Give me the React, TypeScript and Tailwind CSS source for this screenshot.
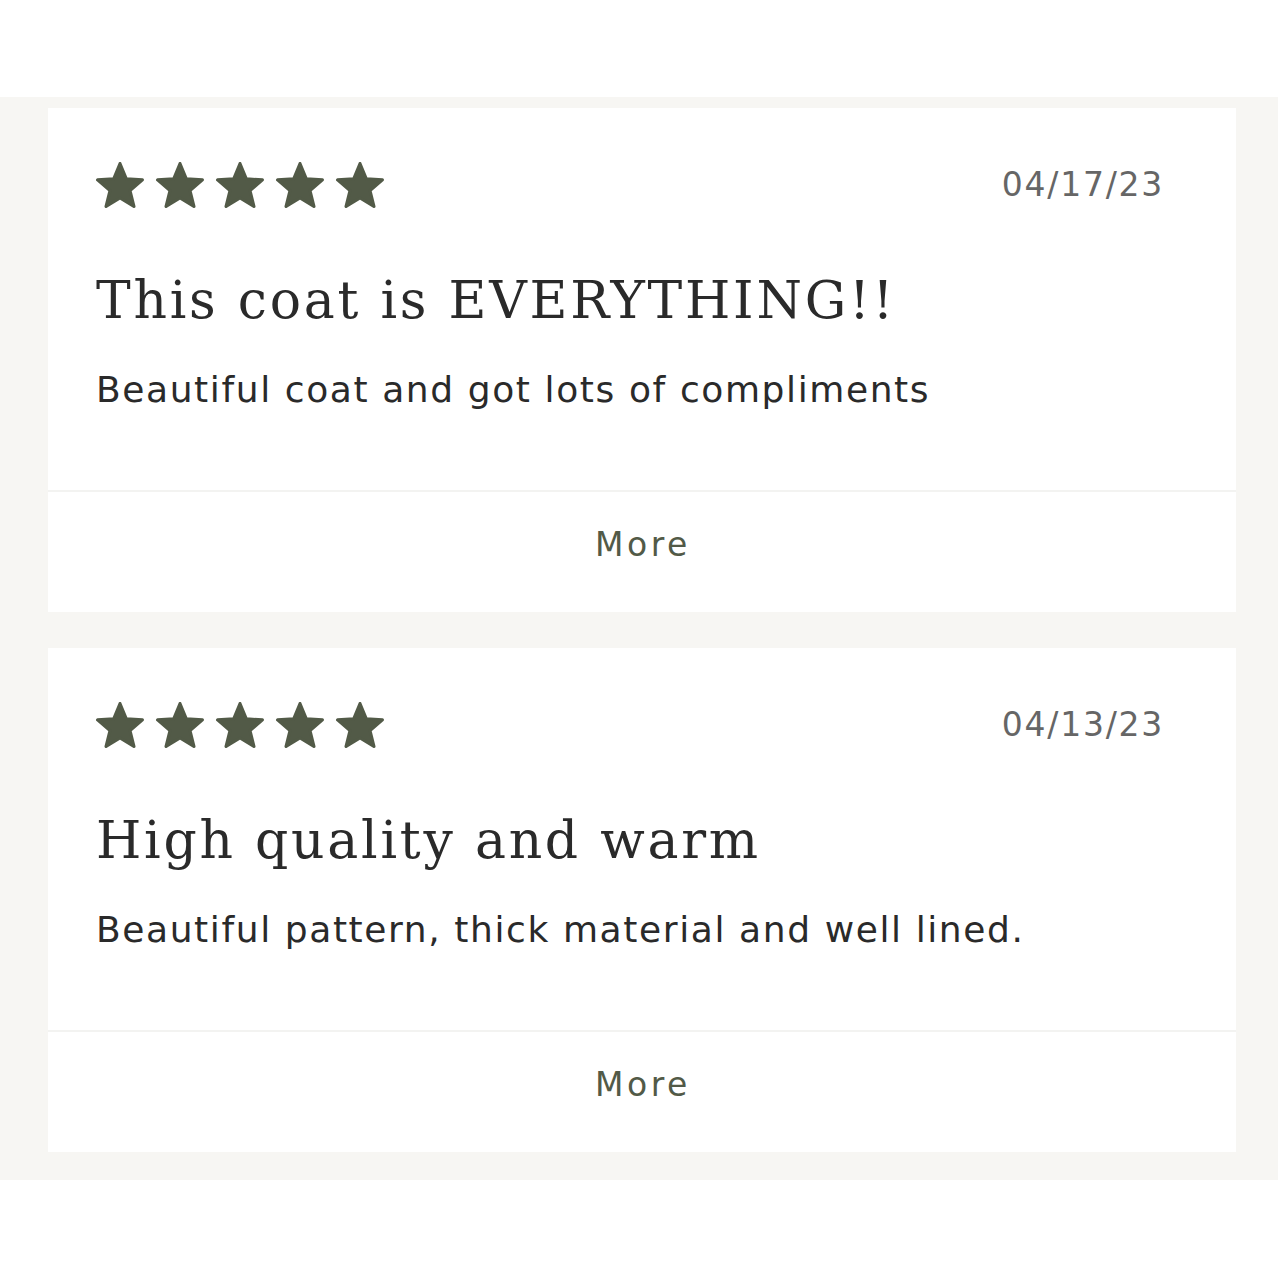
import React from "react";

function Star() {
  return (
    <svg width="48" height="46" viewBox="1 0.5 22 20.8" preserveAspectRatio="none" className="block">
      <path
        d="M12 1.2 L14.9 8.1 L22.3 8.6 L16.6 13.4 L18.4 20.6 L12 16.7 L5.6 20.6 L7.4 13.4 L1.7 8.6 L9.1 8.1 Z"
        fill="#525a47"
        stroke="#525a47"
        strokeWidth="1.4"
        strokeLinejoin="round"
      />
    </svg>
  );
}

const sans = '"DejaVu Sans", Verdana, sans-serif';
const serif = '"DejaVu Serif", Georgia, serif';

function Review({ date, title, body }: { date: string; title: string; body: string }) {
  return (
    <div className="bg-white">
      <div className="pl-[48px] pr-[72px] pt-[54px] h-[382px]">
        <div className="flex items-center justify-between h-[46px]">
          <div className="flex gap-[12px]">
            <Star />
            <Star />
            <Star />
            <Star />
            <Star />
          </div>
          <div className="text-[33px] text-[#666666] tracking-[1.75px]" style={{ fontFamily: sans }}>
            {date}
          </div>
        </div>
        <div
          className="mt-[60px] text-[52px] leading-[64px] text-[#2a2a2a] tracking-[2.75px]"
          style={{ fontFamily: serif }}
        >
          {title}
        </div>
        <div
          className="mt-[34px] text-[36px] leading-[48px] text-[#2a2a2a] tracking-[1.6px]"
          style={{ fontFamily: sans }}
        >
          {body}
        </div>
      </div>
      <div className="h-[2px] bg-[#f3f3f1]" />
      <div
        className="h-[120px] flex items-center justify-center text-[33px] text-[#525a47] tracking-[3.5px] pb-[14px] pl-[2px]"
        style={{ fontFamily: sans }}
      >
        More
      </div>
    </div>
  );
}

export default function App() {
  return (
    <div className="w-[1278px] h-[1278px] bg-white">
      <div className="h-[97px]" />
      <div className="bg-[#f7f6f3] pt-[11px] pb-[28px] pl-[48px] pr-[42px] flex flex-col gap-[36px]">
        <Review
          date="04/17/23"
          title="This coat is EVERYTHING!!"
          body="Beautiful coat and got lots of compliments"
        />
        <Review
          date="04/13/23"
          title="High quality and warm"
          body="Beautiful pattern, thick material and well lined."
        />
      </div>
    </div>
  );
}
